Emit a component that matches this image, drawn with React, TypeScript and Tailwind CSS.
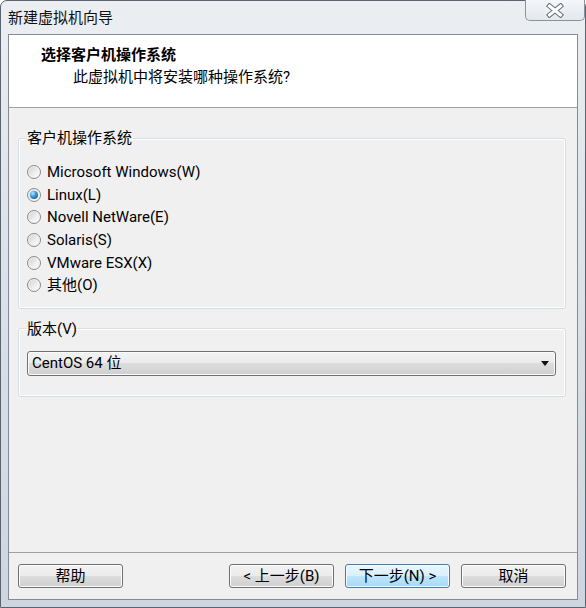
import React from "react";

const options = [
  "Microsoft Windows(W)",
  "Linux(L)",
  "Novell NetWare(E)",
  "Solaris(S)",
  "VMware ESX(X)",
  "其他(O)",
];

function Radio({ checked }: { checked: boolean }) {
  return (
    <span className="flex h-[14px] w-[14px] shrink-0 items-center justify-center rounded-full border border-[#8a8a8a] bg-[linear-gradient(135deg,#cfcfcf,#f0f0f0_60%,#ffffff)] shadow-[inset_0_0_0_1px_#f4f4f4]">
      {checked && (
        <span className="h-[8px] w-[8px] rounded-full bg-[radial-gradient(circle_at_35%_30%,#b9ecff_0%,#3a9be0_40%,#0c3f6e_100%)]" />
      )}
    </span>
  );
}

function Btn({ label, primary }: { label: string; primary?: boolean }) {
  return (
    <div
      className={
        primary
          ? "flex h-[24px] w-[105px] items-center justify-center rounded-[3px] border border-[#3c7fb1] bg-[linear-gradient(#eaf6fd,#d9f0fc_50%,#bee6fd_50%,#a7d9f5)] shadow-[inset_0_0_0_1px_#f4fbff]"
          : "flex h-[24px] w-[105px] items-center justify-center rounded-[3px] border border-[#707070] bg-[linear-gradient(#f2f2f2,#ebebeb_50%,#dddddd_50%,#cfcfcf)] shadow-[inset_0_0_0_1px_#fcfcfc]"
      }
    >
      {label}
    </div>
  );
}

export default function App() {
  return (
    <div className="h-[608px] w-[586px] bg-white font-['Roboto','Noto_Sans_CJK_SC',sans-serif] text-[15px] leading-[20px] text-black">
      <div className="flex h-full flex-col rounded-t-[7px] border border-[#5b646e] bg-[linear-gradient(#eceff2,#dfe5eb_30%,#cdd6df)] px-[7px] pb-[7px]">
        <div className="flex h-[33px] items-start justify-between">
          <div className="pt-[7px] text-[#111]">新建虚拟机向导</div>
          <div className="-mr-[7px] -mt-[1px] flex h-[21px] w-[60px] items-center justify-center rounded-b-[5px] border border-t-0 border-[#8a939d] bg-[linear-gradient(#f4f6f8,#e3e8ed)]">
            <svg width="20" height="15" viewBox="0 0 20 15">
              <path d="M4.5 3 L15.5 12 M15.5 3 L4.5 12" stroke="#6b7178" strokeWidth="5" strokeLinecap="square" fill="none" />
              <path d="M4.5 3 L15.5 12 M15.5 3 L4.5 12" stroke="#ffffff" strokeWidth="3" strokeLinecap="square" fill="none" />
            </svg>
          </div>
        </div>
        <div className="flex flex-1 flex-col border border-[#838c96] bg-[#f0f0f0]">
          <div className="h-[73px] border-b border-[#a0a0a0] bg-white">
            <div className="pl-[32px] pt-[10px] font-bold">选择客户机操作系统</div>
            <div className="pl-[64px] pt-[2px]">此虚拟机中将安装哪种操作系统?</div>
          </div>

          <fieldset className="ml-[9px] mr-[11px] mt-[20px] rounded-[3px] border border-[#d5dfe5] pb-[11px] pl-[7px] pr-[9px] shadow-[inset_0_0_0_1px_#ffffff]">
            <legend className="px-[1px]">客户机操作系统</legend>
            <div className="ml-[1px] mt-[13px] flex flex-col">
              {options.map((o, i) => (
                <div key={o} className="flex h-[22.6px] items-center gap-[6px]">
                  <Radio checked={i === 1} />
                  <span>{o}</span>
                </div>
              ))}
            </div>
          </fieldset>

          <fieldset className="ml-[9px] mr-[11px] mt-[10px] rounded-[3px] border border-[#d5dfe5] pb-[20px] pl-[7px] pr-[9px] shadow-[inset_0_0_0_1px_#ffffff]">
            <legend className="px-[1px]">版本(V)</legend>
            <div className="ml-[1px] mt-[12px] flex h-[25px] items-center justify-between rounded-[3px] border border-[#707070] bg-[linear-gradient(#f2f2f2,#ebebeb_50%,#dddddd_50%,#cfcfcf)] pl-[4px] pr-[6px] shadow-[inset_0_0_0_1px_#fcfcfc]">
              <span>CentOS 64 位</span>
              <svg width="8" height="5" viewBox="0 0 8 5">
                <path d="M0 0 H8 L4 5 Z" fill="#111" />
              </svg>
            </div>
          </fieldset>

          <div className="flex-1" />

          <div className="border-t border-[#a0a0a0] pb-[11px] pl-[9px] pr-[11px] pt-[11px]">
            <div className="flex items-center">
              <Btn label="帮助" />
              <div className="ml-auto flex gap-[11px]">
                <Btn label="< 上一步(B)" />
                <Btn label="下一步(N) >" primary />
                <Btn label="取消" />
              </div>
            </div>
          </div>
        </div>
      </div>
    </div>
  );
}
